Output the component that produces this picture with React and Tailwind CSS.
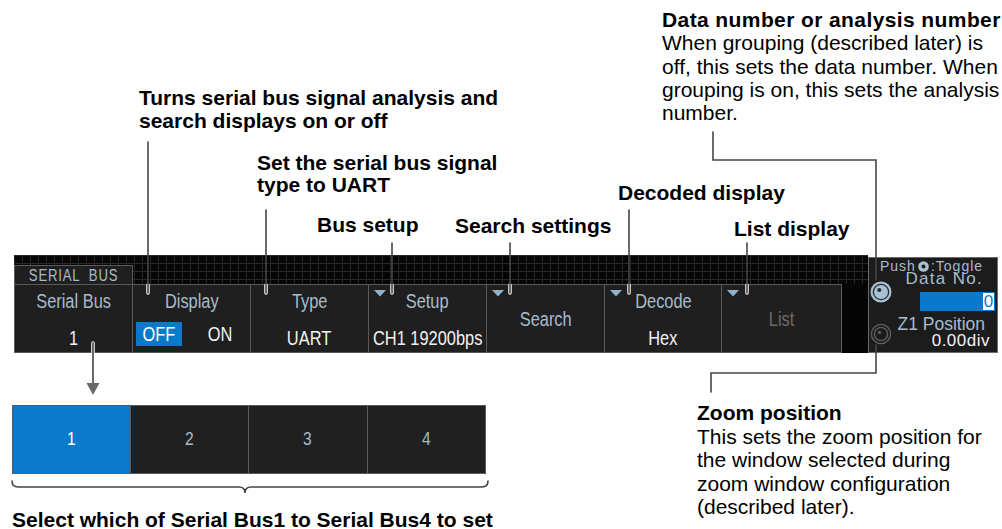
const gridBg =
  "bg-[#050505] bg-[linear-gradient(to_right,#262626_1px,transparent_1px),linear-gradient(to_bottom,#262626_1px,transparent_1px)] bg-[size:8px_8px]";

// the scope font is condensed: squeeze Liberation Sans to Arial Narrow width
const Sq = ({ children }) => <span className="inline-block whitespace-pre scale-x-[0.82]">{children}</span>;

const Tri = () => (
  <svg className="absolute left-[5px] top-[5px]" width="12" height="7" viewBox="0 0 12 7">
    <polygon points="0,0 12,0 6,6.5" fill="#8fb2cc" />
  </svg>
);

const Cell = ({ w, label, value, tri, dim, first }) => (
  <div
    className={`relative flex h-full flex-col items-center border-y border-r border-[#5a5a5a] bg-[#1f1f1f] ${first ? "border-l" : ""} ${w}`}
  >
    {tri && <Tri />}
    {value ? (
      <>
        <div className="mt-[6px] h-[20px] text-[20px] leading-[20px] text-[#a6bccb]">
          <Sq>{label}</Sq>
        </div>
        <div className="mt-[17px] h-[20px] text-[20px] leading-[20px] text-[#f2f2f2]">
          <Sq>{value}</Sq>
        </div>
      </>
    ) : (
      <div className={`mt-[24px] h-[20px] text-[20px] leading-[20px] ${dim ? "text-[#6c6c6c]" : "text-[#a6bccb]"}`}>
        <Sq>{label}</Sq>
      </div>
    )}
  </div>
);

const KnobOn = () => (
  <svg width="22" height="22" viewBox="0 0 22 22">
    <circle cx="11" cy="11" r="10.5" fill="#a9c0d1" />
    <circle cx="11" cy="11" r="8.3" fill="#233039" />
    <circle cx="11" cy="11" r="7" fill="#a9c0d1" />
    <circle cx="9.3" cy="9" r="2.1" fill="#233039" />
  </svg>
);

const KnobOff = () => (
  <svg width="22" height="22" viewBox="0 0 22 22">
    <circle cx="11" cy="11" r="9.6" fill="none" stroke="#5e5e5e" strokeWidth="1.4" />
    <circle cx="11" cy="11" r="6.6" fill="none" stroke="#5e5e5e" strokeWidth="1.4" />
    <circle cx="9.6" cy="9.4" r="1.6" fill="#5e5e5e" />
  </svg>
);

export default function App() {
  return (
    <div className="relative h-[529px] w-[1002px] overflow-hidden bg-white font-['Liberation_Sans',Arial,sans-serif] text-black">
      {/* callouts */}
      <div className="absolute left-[662px] top-[8px] text-[21px] leading-[23.3px]">
        <div className="font-bold tracking-[0.4px]">Data number or analysis number</div>
        <div>When grouping (described later) is</div>
        <div>off, this sets the data number. When</div>
        <div>grouping is on, this sets the analysis</div>
        <div>number.</div>
      </div>
      <div className="absolute left-[139px] top-[86px] text-[21px] font-bold leading-[23px]">
        <div>Turns serial bus signal analysis and</div>
        <div>search displays on or off</div>
      </div>
      <div className="absolute left-[257px] top-[152px] text-[21px] font-bold leading-[22px]">
        <div>Set the serial bus signal</div>
        <div>type to UART</div>
      </div>
      <div className="absolute left-[618px] top-[181px] text-[21px] font-bold leading-[23px]">Decoded display</div>
      <div className="absolute left-[317px] top-[213px] text-[21px] font-bold leading-[23px]">Bus setup</div>
      <div className="absolute left-[455px] top-[214px] text-[21px] font-bold leading-[23px]">Search settings</div>
      <div className="absolute left-[734px] top-[217px] text-[21px] font-bold leading-[23px]">List display</div>
      <div className="absolute left-[697px] top-[401px] text-[21px] leading-[23.5px]">
        <div className="font-bold">Zoom position</div>
        <div>This sets the zoom position for</div>
        <div>the window selected during</div>
        <div>zoom window configuration</div>
        <div>(described later).</div>
      </div>

      {/* menu bar */}
      <div className="flex pl-[14px] pt-[255px]">
        <div className="flex w-[854px] flex-col">
          <div className={`flex h-[29px] items-end ${gridBg}`}>
            <div className="h-[19px] w-[119px] border border-b-0 border-[#5a5a5a] bg-[#1f1f1f] text-center text-[16px] leading-[19px] tracking-[1px] text-[#a6bccb]">
              <Sq>SERIAL  BUS</Sq>
            </div>
          </div>
          <div className="flex h-[69px] bg-[#050505]">
            <Cell first w="w-[119px]" label="Serial Bus" value="1" />
            <div className="relative flex h-full w-[118px] flex-col items-center border-y border-r border-[#5a5a5a] bg-[#1f1f1f]">
              <div className="mt-[6px] h-[20px] text-[20px] leading-[20px] text-[#a6bccb]">
                <Sq>Display</Sq>
              </div>
              <div className="mt-[11px] flex w-full items-center pl-[3px] text-[20px] leading-[24px]">
                <div className="h-[24px] w-[46px] bg-[#0b79c9] text-center text-white">
                  <Sq>OFF</Sq>
                </div>
                <div className="ml-[23px] text-[#f2f2f2]">
                  <Sq>ON</Sq>
                </div>
              </div>
            </div>
            <Cell w="w-[118px]" label="Type" value="UART" />
            <Cell tri w="w-[118px]" label="Setup" value="CH1 19200bps" />
            <Cell tri w="w-[118px]" label="Search" />
            <Cell tri w="w-[117px]" label="Decode" value="Hex" />
            <Cell tri dim w="w-[120px]" label="List" />
            <div className="w-[26px] bg-[#050505]" />
          </div>
        </div>

        <div className="mt-[2px] flex h-[96px] w-[130px] flex-col border border-[#6a6a6a] bg-[#1c1c1c] text-[#a6bccb]">
          <div className="mt-[2px] flex h-[12px] items-center whitespace-nowrap pl-[11px] text-[14px] leading-[12px] tracking-[1px]">
            Push
            <svg className="mx-[2px] shrink-0" width="11" height="11" viewBox="0 0 11 11">
              <circle cx="5.5" cy="5.5" r="5.3" fill="#a9c0d1" />
              <circle cx="5.5" cy="5.5" r="2" fill="#1c1c1c" />
            </svg>
            :Toggle
          </div>
          <div className="flex">
            <div className="ml-[1px] flex w-[24px] flex-col">
              <div className="mt-[9px]">
                <KnobOn />
              </div>
              <div className="mt-[20px]">
                <KnobOff />
              </div>
            </div>
            <div className="flex flex-1 flex-col items-end pr-[2px]">
              <div className="h-[14px] whitespace-nowrap pr-[12px] text-[17px] leading-[14px] tracking-[1.3px]">Data No.</div>
              <div className="mt-[6px] flex h-[19px] w-[75px] justify-end bg-[#0b79c9]">
                <div className="mr-[1px] mt-[1px] h-[17px] w-[11px] bg-white text-center text-[17px] leading-[17px] text-[#0b79c9]">
                  0
                </div>
              </div>
              <div className="mt-[5px] h-[16px] whitespace-nowrap pr-[10px] text-[17.5px] leading-[16px]">Z1 Position</div>
              <div className="mt-[2px] h-[14px] whitespace-nowrap pr-[5px] text-[17px] leading-[14px] tracking-[0.5px] text-[#f2f2f2]">
                0.00div
              </div>
            </div>
          </div>
        </div>
      </div>

      {/* bus selector */}
      <div className="ml-[12px] mt-[52px] grid h-[69px] w-[474px] grid-cols-4 text-[19px]">
        <div className="flex items-center justify-center border border-[#5a5a5a] bg-[#0b7acc] text-white">
          <Sq>1</Sq>
        </div>
        <div className="flex items-center justify-center border-y border-r border-[#5a5a5a] bg-[#202020] text-[#a9bac8]">
          <Sq>2</Sq>
        </div>
        <div className="flex items-center justify-center border-y border-r border-[#5a5a5a] bg-[#202020] text-[#a9bac8]">
          <Sq>3</Sq>
        </div>
        <div className="flex items-center justify-center border-y border-r border-[#5a5a5a] bg-[#202020] text-[#a9bac8]">
          <Sq>4</Sq>
        </div>
      </div>
      <div className="ml-[12px] mt-[34px] whitespace-nowrap text-[21px] font-bold leading-[23px]">
        Select which of Serial Bus1 to Serial Bus4 to set
      </div>

      {/* leader lines */}
      <svg className="pointer-events-none absolute left-0 top-0" width="1002" height="529" viewBox="0 0 1002 529">
        <g fill="none" strokeLinecap="round" strokeLinejoin="miter">
          <g stroke="#ffffff" strokeWidth="3.5">
            <path d="M148 285 V293" />
            <path d="M266 285 V293" />
            <path d="M392 285 V293" />
            <path d="M510 285 V293" />
            <path d="M629 285 V293" />
            <path d="M747 285 V293" />
            <path d="M93 343 V352" />
          </g>
          <g stroke="#454545" strokeWidth="1.6">
            <path d="M148 142 V293" />
            <path d="M266 210 V293" />
            <path d="M392 243 V293" />
            <path d="M510 243 V293" />
            <path d="M629 210 V293" />
            <path d="M747 243 V293" />
            <path d="M713 132 V160 H876 V280" />
            <path d="M876 345 V373 H711 V392" />
            <path d="M93 343 V386" stroke="#6a6a6a" strokeWidth="2" />
            <path d="M12 481 Q12 487 18 487 H239 Q245 487 245 493 Q245 487 251 487 H482 Q488 487 488 481" />
          </g>
          <polygon points="86.5,383 99.5,383 93,395" fill="#6a6a6a" />
        </g>
      </svg>
    </div>
  );
}
